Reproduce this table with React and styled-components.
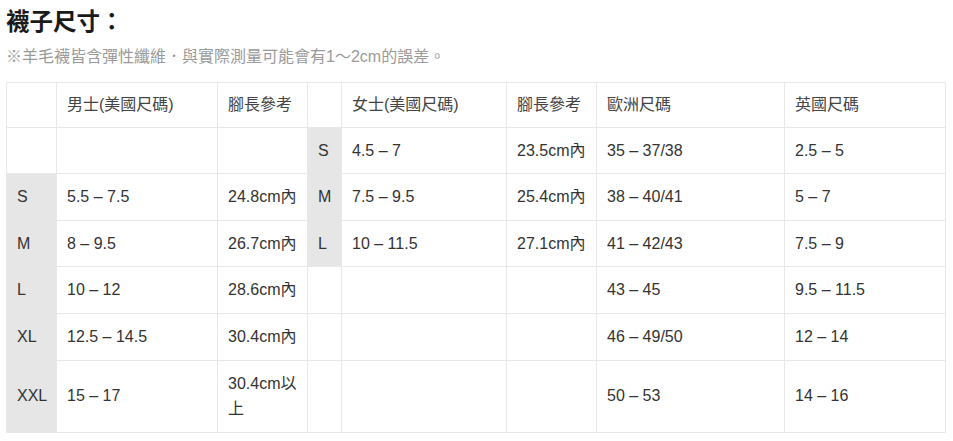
import styled, { createGlobalStyle } from "styled-components";

const GlobalStyle = createGlobalStyle`
  html, body {
    margin: 0;
    padding: 0;
    background: #ffffff;
  }
  body {
    font-family: "Liberation Sans", "Noto Sans CJK TC", sans-serif;
  }
`;

const widths = [50, 161, 90, 34, 165, 90, 188, 161];

const header = ["", "男士(美國尺碼)", "腳長參考", "", "女士(美國尺碼)", "腳長參考", "歐洲尺碼", "英國尺碼"];

// null in a label column = empty white cell, text = gray size label
const rows = [
  [null, "", "", "S", "4.5 – 7", "23.5cm內", "35 – 37/38", "2.5 – 5"],
  ["S", "5.5 – 7.5", "24.8cm內", "M", "7.5 – 9.5", "25.4cm內", "38 – 40/41", "5 – 7"],
  ["M", "8 – 9.5", "26.7cm內", "L", "10 – 11.5", "27.1cm內", "41 – 42/43", "7.5 – 9"],
  ["L", "10 – 12", "28.6cm內", null, "", "", "43 – 45", "9.5 – 11.5"],
  ["XL", "12.5 – 14.5", "30.4cm內", null, "", "", "46 – 49/50", "12 – 14"],
  ["XXL", "15 – 17", "30.4cm以上", null, "", "", "50 – 53", "14 – 16"],
];

export default function App() {
  return (
    <Page>
      <GlobalStyle />
      <Title>襪子尺寸：</Title>
      <Note>※羊毛襪皆含彈性纖維．與實際測量可能會有1～2cm的誤差。</Note>
      <SizeTable>
        <colgroup>
          {widths.map((w, i) => (
            <col key={i} style={{ width: w }} />
          ))}
        </colgroup>
        <thead>
          <tr>
            {header.map((h, i) => (
              <HeadCell key={i}>{h}</HeadCell>
            ))}
          </tr>
        </thead>
        <tbody>
          {rows.map((r, ri) => (
            <tr key={ri}>
              {r.map((c, ci) => {
                const label = ci === 0 || ci === 3;
                return (
                  <Cell key={ci} $gray={label && c !== null}>
                    {c}
                  </Cell>
                );
              })}
            </tr>
          ))}
        </tbody>
      </SizeTable>
    </Page>
  );
}

const Page = styled.div`
  padding: 4px 0 0 6px;
  width: 947px;
`;

const Title = styled.h1`
  margin: 0;
  font-family: "Noto Sans CJK TC", sans-serif;
  font-size: 23.5px;
  font-weight: 700;
  line-height: 32px;
  color: #1a1a1a;
`;

const Note = styled.p`
  margin: 9px 0 0 0;
  font-family: "Liberation Sans", "Noto Sans CJK TC", sans-serif;
  font-size: 16px;
  line-height: 24px;
  color: #9a9a9a;
`;

const SizeTable = styled.table`
  margin-top: 13px;
  width: 940px;
  table-layout: fixed;
  border-collapse: collapse;
  font-family: "Liberation Sans", "Noto Sans CJK TC", sans-serif;
  font-size: 16px;
  line-height: 25.6px;
`;

const HeadCell = styled.th`
  border: 1px solid #e8e8e8;
  padding: 9px 10px;
  text-align: left;
  font-weight: 400;
  color: #444444;
`;

const Cell = styled.td`
  border: 1px solid #e8e8e8;
  padding: 10px;
  text-align: left;
  vertical-align: middle;
  color: #333333;
  background: ${(p) => (p.$gray ? "#e6e6e6" : "#ffffff")};
`;
